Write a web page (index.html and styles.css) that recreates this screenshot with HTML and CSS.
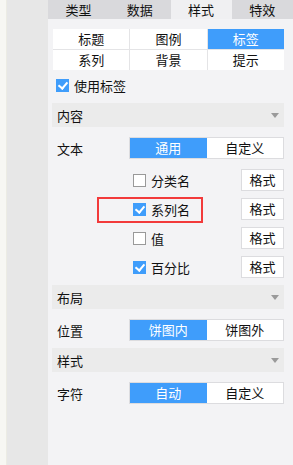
FILE: index.html
```html
<!DOCTYPE html>
<html lang="zh">
<head>
    <meta charset="UTF-8">
    <meta name="viewport" content="width=device-width, initial-scale=1.0">
    <title>标签设置</title>
    <link rel="stylesheet" href="styles.css">
</head>
<body>
    <div class="page">
        <div class="edge"></div>
        <div class="side"></div>
        <div class="panel">
            <div class="tabs">
                <div class="tab">类型</div>
                <div class="tab">数据</div>
                <div class="tab active">样式</div>
                <div class="tab">特效</div>
            </div>

            <div class="grid">
                <div class="cell">标题</div>
                <div class="cell">图例</div>
                <div class="cell on">标签</div>
                <div class="cell">系列</div>
                <div class="cell">背景</div>
                <div class="cell">提示</div>
            </div>

            <label class="check use-label"><span class="box checked"></span>使用标签</label>

            <div class="section">内容<span class="arrow"></span></div>

            <div class="field">
                <span class="field-label">文本</span>
                <div class="seg">
                    <div class="seg-item on">通用</div>
                    <div class="seg-item">自定义</div>
                </div>
            </div>

            <div class="opts">
                <div class="opt">
                    <label class="check"><span class="box"></span>分类名</label>
                    <div class="btn">格式</div>
                </div>
                <div class="opt">
                    <label class="check highlight"><span class="box checked"></span>系列名</label>
                    <div class="btn">格式</div>
                </div>
                <div class="opt">
                    <label class="check"><span class="box"></span>值</label>
                    <div class="btn">格式</div>
                </div>
                <div class="opt">
                    <label class="check"><span class="box checked"></span>百分比</label>
                    <div class="btn">格式</div>
                </div>
            </div>

            <div class="section">布局<span class="arrow"></span></div>
            <div class="field">
                <span class="field-label">位置</span>
                <div class="seg">
                    <div class="seg-item on">饼图内</div>
                    <div class="seg-item">饼图外</div>
                </div>
            </div>

            <div class="section">样式<span class="arrow"></span></div>
            <div class="field">
                <span class="field-label">字符</span>
                <div class="seg">
                    <div class="seg-item on">自动</div>
                    <div class="seg-item">自定义</div>
                </div>
            </div>
        </div>
    </div>
</body>
</html>
```

FILE: styles.css
```css
html, body {
    margin: 0;
    height: 100%;
}
body {
    font-family: "Noto Sans CJK SC", "Noto Sans", sans-serif;
    font-size: 13px;
    color: #111;
}
.page {
    display: flex;
    height: 465px;
    overflow: hidden;
}
.edge {
    width: 7px;
    background-color: #f7f7f3;
    border-right: 1px solid #ecece4;
    box-sizing: border-box;
}
.side {
    width: 41px;
    background-color: #e7e7e7;
}
.panel {
    flex: 1;
    background-color: #f3f3f5;
    padding-right: 9px;
    box-sizing: border-box;
}
.tabs {
    display: flex;
    height: 19px;
    background-color: #d9d9dc;
    margin-right: -9px;
}
.tab {
    flex: 1;
    text-align: center;
    line-height: 19px;
    font-size: 13px;
}
.tab.active {
    background-color: #f0f0f2;
}
.grid {
    display: grid;
    grid-template-columns: repeat(3, 1fr);
    gap: 1px;
    margin: 10px 0 0 5px;
    background-color: #e4e4e6;
}
.cell {
    background-color: #fff;
    height: 20px;
    line-height: 20px;
    text-align: center;
}
.cell.on {
    background-color: #3f9dfb;
    color: #fff;
}
.check {
    display: flex;
    align-items: center;
    gap: 5px;
    height: 22px;
}
.use-label {
    margin: 4px 0 0 8px;
}
.box {
    width: 11px;
    height: 11px;
    border: 1px solid #999;
    background-color: #fff;
    position: relative;
}
.box.checked {
    background-color: #3f9dfb;
    border-color: #3f9dfb;
}
.box.checked::after {
    content: "";
    position: absolute;
    left: 3px;
    top: 0;
    width: 4px;
    height: 7px;
    border: solid #fff;
    border-width: 0 2px 2px 0;
    transform: rotate(40deg);
}
.section {
    display: flex;
    justify-content: space-between;
    align-items: center;
    height: 24px;
    margin: 7px 0 0 4px;
    padding: 0 5px 0 5px;
    background-color: #ebebeb;
}
.arrow {
    width: 0;
    height: 0;
    border-left: 4px solid transparent;
    border-right: 4px solid transparent;
    border-top: 5px solid #9a9a9a;
}
.field {
    display: flex;
    align-items: center;
    margin: 10px 0 0 9px;
}
.field-label {
    width: 72px;
}
.seg {
    flex: 1;
    display: flex;
    border: 1px solid #dcdcdf;
    height: 20px;
}
.seg-item {
    flex: 1;
    text-align: center;
    line-height: 20px;
    background-color: #fff;
}
.seg-item.on {
    background-color: #3f9dfb;
    color: #fff;
}
.opts {
    margin: 10px 0 0 85px;
    display: flex;
    flex-direction: column;
    gap: 7px;
}
.opt {
    display: flex;
    align-items: center;
    justify-content: space-between;
}
.highlight {
    position: relative;
}
.highlight::before {
    content: "";
    position: absolute;
    left: -36px;
    top: -1px;
    width: 102px;
    height: 22px;
    border: 2px solid #f23a3a;
}
.btn {
    width: 41px;
    height: 20px;
    line-height: 20px;
    text-align: center;
    background-color: #fff;
    border: 1px solid #dcdcdf;
}
```
